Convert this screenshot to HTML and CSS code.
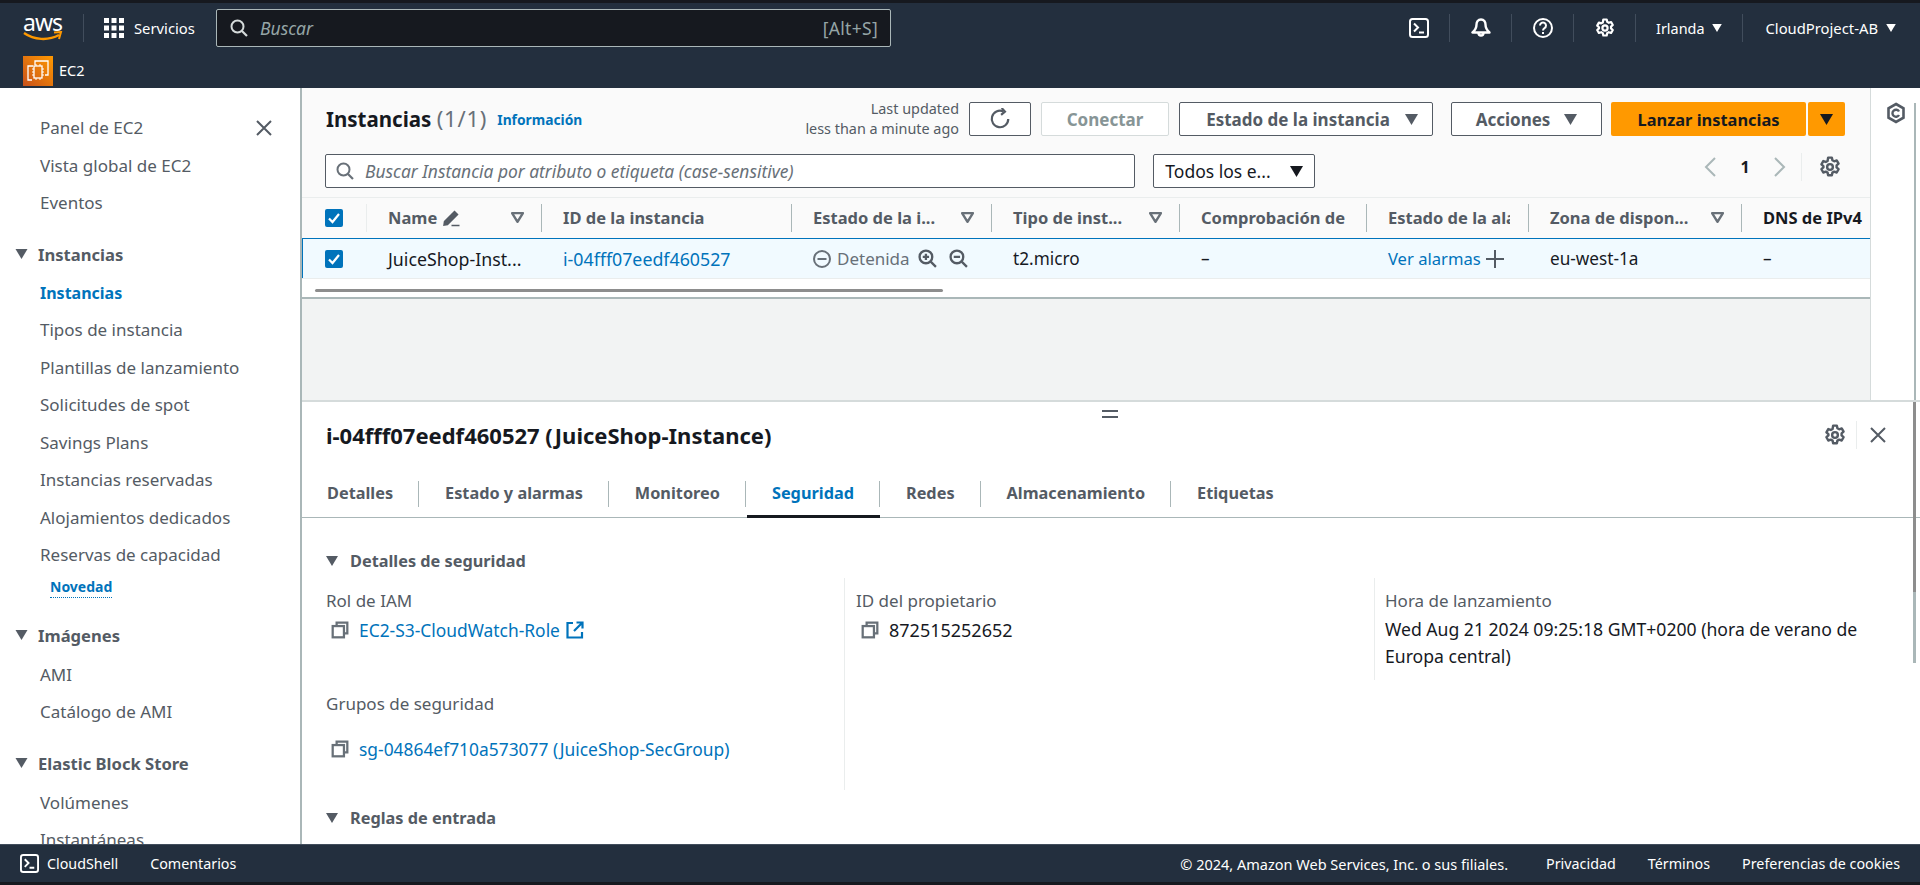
FILE: index.html
```html
<!DOCTYPE html>
<html lang="es">
<head>
    <meta charset="UTF-8">
    <meta content="width=device-width" name="viewport">
    <title>Instancias | EC2</title>
    <link rel="stylesheet" href="styles.css">
</head>
<body>
    <svg class="defs" width="0" height="0">
        <symbol id="i-copy" viewBox="0 0 16 16"><path d="M5 4V1.5h9.5V11H12" fill="none" stroke="currentColor" stroke-width="2"/><rect x="1.5" y="4.5" width="10" height="10" fill="none" stroke="currentColor" stroke-width="2"/></symbol>
        <symbol id="i-gear" viewBox="0 0 20 20"><path d="M8.3 1.5h3.4l.5 2.4 1.6.9 2.3-.8 1.7 3-1.8 1.6v1.8l1.8 1.6-1.7 3-2.3-.8-1.6.9-.5 2.4H8.3l-.5-2.4-1.6-.9-2.3.8-1.7-3 1.8-1.6V9.2L2.2 7.6l1.7-3 2.3.8 1.6-.9z" fill="none" stroke="currentColor" stroke-width="2.2" stroke-linejoin="round"/><circle cx="10" cy="10" r="2.6" fill="none" stroke="currentColor" stroke-width="2.2"/></symbol>
        <symbol id="i-search" viewBox="0 0 18 18"><circle cx="7.5" cy="7.5" r="6" fill="none" stroke="currentColor" stroke-width="2"/><path d="M12 12l5 5" stroke="currentColor" stroke-width="2.2"/></symbol>
        <symbol id="i-shell" viewBox="0 0 20 20"><rect x="1" y="1" width="18" height="18" rx="2.5" fill="none" stroke="currentColor" stroke-width="2"/><path d="M5 5.5l4 4-4 4M10 14.5h5" fill="none" stroke="currentColor" stroke-width="2"/></symbol>
        <symbol id="i-caret" viewBox="0 0 12 10"><path d="M0 0h12L6 10z" fill="currentColor"/></symbol>
        <symbol id="i-filter" viewBox="0 0 12 10"><path d="M1 1h10L6 9z" fill="none" stroke="currentColor" stroke-width="2.2" stroke-linejoin="round"/></symbol>
        <symbol id="i-check" viewBox="0 0 18 18"><rect width="18" height="18" rx="2" fill="#0073bb"/><path d="M4 9.5l3.5 3.5L14 5" fill="none" stroke="#fff" stroke-width="2.2"/></symbol>
        <symbol id="i-close" viewBox="0 0 16 16"><path d="M1 1l14 14M15 1L1 15" stroke="currentColor" stroke-width="2"/></symbol>
    </svg>

    <header class="topnav">
        <div class="nav-row">
            <a class="logo">
                <span class="logo-text">aws</span>
                <svg class="logo-smile" viewBox="0 0 40 12"><path d="M1 2c10 7 24 8 35 2" fill="none" stroke="#f90" stroke-width="2.4"/><path d="M31 1.5l7-.5-2 7" fill="none" stroke="#f90" stroke-width="2"/></svg>
            </a>
            <span class="nav-sep logo-sep"></span>
            <a class="services">
                <svg class="grid-icon" viewBox="0 0 20 20"><g fill="#fff"><rect width="5" height="5"/><rect x="7.5" width="5" height="5"/><rect x="15" width="5" height="5"/><rect y="7.5" width="5" height="5"/><rect x="7.5" y="7.5" width="5" height="5"/><rect x="15" y="7.5" width="5" height="5"/><rect y="15" width="5" height="5"/><rect x="7.5" y="15" width="5" height="5"/><rect x="15" y="15" width="5" height="5"/></g></svg>
                Servicios
            </a>
            <div class="global-search">
                <svg class="icon-18"><use href="#i-search"/></svg>
                <span class="global-search-text">Buscar</span>
                <span class="shortcut">[Alt+S]</span>
            </div>
            <div class="nav-right">
                <a class="nav-icon"><svg class="icon-20"><use href="#i-shell"/></svg></a>
                <a class="nav-icon">
                    <svg class="icon-20" viewBox="0 0 20 20"><path d="M10 1.5c-3 0-4.5 2.5-4.5 5 0 3-1 5.500-4 8h17c-3-2.500-4-5-4-8 0-2.500-1.500-5-4.500-5z" fill="none" stroke="#fff" stroke-width="2.4" stroke-linejoin="round"/><path d="M7.5 15a2.5 2.5 0 0 0 5 0" fill="none" stroke="#fff" stroke-width="2.4"/></svg>
                </a>
                <a class="nav-icon">
                    <svg class="icon-20" viewBox="0 0 20 20"><circle cx="10" cy="10" r="9" fill="none" stroke="#fff" stroke-width="2"/><path d="M7 7.5a3 3 0 1 1 4.5 2.6c-1 .6-1.5 1.2-1.5 2.4" fill="none" stroke="#fff" stroke-width="2"/><rect x="9" y="14" width="2" height="2" fill="#fff"/></svg>
                </a>
                <a class="nav-icon"><svg class="icon-20"><use href="#i-gear"/></svg></a>
                <a class="nav-menu region">Irlanda <svg class="nav-caret"><use href="#i-caret"/></svg></a>
                <a class="nav-menu account">CloudProject-AB <svg class="nav-caret"><use href="#i-caret"/></svg></a>
            </div>
        </div>
        <div class="nav-row-2">
            <svg class="ec2-icon" viewBox="0 0 30 30">
                <defs><linearGradient id="ec2-grad" x1="0" y1="1" x2="1" y2="0"><stop offset="0" stop-color="#c8511b"/><stop offset="1" stop-color="#f90"/></linearGradient></defs>
                <rect width="30" height="30" fill="url(#ec2-grad)"/>
                <path d="M9 24H5V10h5M12 9V5h13v14h-3" fill="none" stroke="#fff" stroke-width="1.3"/>
                <rect x="11" y="10" width="8" height="12" fill="none" stroke="#fff" stroke-width="1.3"/>
                <path d="M9 13h2M9 16h2M9 19h2M19 13h2M19 16h2M19 19h2M13 8v2M17 8v2M13 22v2M17 22v2" stroke="#fff"/>
            </svg>
            <span class="ec2-label">EC2</span>
        </div>
    </header>

    <div class="layout">
        <nav class="sidebar">
            <svg class="side-close"><use href="#i-close"/></svg>
            <a class="side-link">Panel de EC2</a>
            <a class="side-link">Vista global de EC2</a>
            <a class="side-link">Eventos</a>
            <div class="side-head"><svg class="side-caret"><use href="#i-caret"/></svg>Instancias</div>
            <a class="side-link active">Instancias</a>
            <a class="side-link">Tipos de instancia</a>
            <a class="side-link">Plantillas de lanzamiento</a>
            <a class="side-link">Solicitudes de spot</a>
            <a class="side-link">Savings Plans</a>
            <a class="side-link">Instancias reservadas</a>
            <a class="side-link">Alojamientos dedicados</a>
            <a class="side-link">Reservas de capacidad</a>
            <span class="side-new">Novedad</span>
            <div class="side-head"><svg class="side-caret"><use href="#i-caret"/></svg>Imágenes</div>
            <a class="side-link">AMI</a>
            <a class="side-link">Catálogo de AMI</a>
            <div class="side-head"><svg class="side-caret"><use href="#i-caret"/></svg>Elastic Block Store</div>
            <a class="side-link">Volúmenes</a>
            <a class="side-link">Instantáneas</a>
        </nav>

        <main class="content">
            <section class="upper">
                <div class="upper-main">
                    <div class="panel-head">
                        <div class="title-row">
                            <h1 class="panel-title">Instancias <span class="count">(1/1)</span></h1>
                            <a class="info-link">Información</a>
                            <div class="updated">Last updated<br>less than a minute ago</div>
                            <button class="btn btn-refresh">
                                <svg class="icon-22" viewBox="0 0 20 20"><path d="M17.5 10A7.5 7.5 0 1 1 13 3.1" fill="none" stroke="currentColor" stroke-width="2"/><path d="M11.5 0l3 3.3-3.5 3" fill="none" stroke="currentColor" stroke-width="2"/></svg>
                            </button>
                            <button class="btn btn-connect" disabled>Conectar</button>
                            <button class="btn btn-state">Estado de la instancia <svg class="btn-caret"><use href="#i-caret"/></svg></button>
                            <button class="btn btn-actions">Acciones <svg class="btn-caret"><use href="#i-caret"/></svg></button>
                            <button class="btn btn-launch">Lanzar instancias</button>
                            <button class="btn btn-launch-more"><svg class="btn-caret"><use href="#i-caret"/></svg></button>
                        </div>
                        <div class="filter-row">
                            <div class="filter-box">
                                <svg class="icon-18"><use href="#i-search"/></svg>
                                <span>Buscar Instancia por atributo o etiqueta (case-sensitive)</span>
                            </div>
                            <button class="btn filter-select">Todos los e... <svg class="btn-caret"><use href="#i-caret"/></svg></button>
                            <div class="pager">
                                <svg class="pager-arrow" viewBox="0 0 14 22"><path d="M12 2L3 11l9 9" fill="none" stroke="currentColor" stroke-width="2"/></svg>
                                <span class="pager-num">1</span>
                                <svg class="pager-arrow" viewBox="0 0 14 22"><path d="M2 2l9 9-9 9" fill="none" stroke="currentColor" stroke-width="2"/></svg>
                                <span class="pager-gear"><svg class="icon-22"><use href="#i-gear"/></svg></span>
                            </div>
                        </div>
                    </div>

                    <div class="table">
                        <div class="tr thead">
                            <div class="th th-check"><svg class="check"><use href="#i-check"/></svg></div>
                            <div class="th">
                                <span>Name</span>
                                <svg class="edit-icon" viewBox="0 0 18 18"><path d="M2 12.5L12 2.500l3 3-10 10-3.500.5zM9 16.500h8" fill="currentColor" stroke="currentColor" stroke-width="1.5"/></svg>
                                <svg class="sort"><use href="#i-filter"/></svg>
                            </div>
                            <div class="th">ID de la instancia</div>
                            <div class="th"><span>Estado de la i...</span><svg class="sort"><use href="#i-filter"/></svg></div>
                            <div class="th"><span>Tipo de inst...</span><svg class="sort"><use href="#i-filter"/></svg></div>
                            <div class="th">Comprobación de</div>
                            <div class="th"><span class="th-clip">Estado de la alarma</span></div>
                            <div class="th"><span>Zona de dispon...</span><svg class="sort"><use href="#i-filter"/></svg></div>
                            <div class="th th-dark">DNS de IPv4</div>
                        </div>
                        <div class="tr trow">
                            <div class="td td-check"><svg class="check"><use href="#i-check"/></svg></div>
                            <div class="td td-wide">JuiceShop-Inst...</div>
                            <div class="td td-wide"><a class="link">i-04fff07eedf460527</a></div>
                            <div class="td state">
                                <svg class="state-icon" viewBox="0 0 18 18"><circle cx="9" cy="9" r="8" fill="none" stroke="currentColor" stroke-width="2"/><path d="M4.5 9h9" stroke="currentColor" stroke-width="2"/></svg>
                                <span>Detenida</span>
                                <svg class="zoom-icon" viewBox="0 0 18 18"><circle cx="7.5" cy="7.5" r="6" fill="none" stroke="currentColor" stroke-width="2.2"/><path d="M12 12l5 5M4.5 7.5h6M7.5 4.5v6" stroke="currentColor" stroke-width="2.2"/></svg>
                                <svg class="zoom-icon" viewBox="0 0 18 18"><circle cx="7.5" cy="7.5" r="6" fill="none" stroke="currentColor" stroke-width="2.2"/><path d="M12 12l5 5M4.5 7.5h6" stroke="currentColor" stroke-width="2.2"/></svg>
                            </div>
                            <div class="td">t2.micro</div>
                            <div class="td">–</div>
                            <div class="td alarm">
                                <a class="link">Ver alarmas</a>
                                <svg class="plus-icon" viewBox="0 0 18 18"><path d="M0 9h18M9 0v18" stroke="currentColor" stroke-width="2"/></svg>
                            </div>
                            <div class="td">eu-west-1a</div>
                            <div class="td">–</div>
                        </div>
                        <div class="hscroll"><span class="hscroll-thumb"></span></div>
                    </div>
                    <div class="empty"></div>
                </div>
                <aside class="rail">
                    <svg class="rail-icon" viewBox="0 0 20 22"><path d="M10 2l7.5 4.3v9.400L10 20l-7.5-4.300V6.300z" fill="none" stroke="#545b64" stroke-width="2.6"/><path d="M13 9.5a3.500 3.500 0 1 0 0 3.500" fill="none" stroke="#545b64" stroke-width="2.4"/></svg>
                </aside>
            </section>

            <section class="lower">
                <span class="split-handle"></span>
                <div class="lower-head">
                    <h2 class="lower-title">i-04fff07eedf460527 (JuiceShop-Instance)</h2>
                    <div class="lower-tools">
                        <svg class="icon-22"><use href="#i-gear"/></svg>
                        <span class="tool-sep"></span>
                        <svg class="lower-close"><use href="#i-close"/></svg>
                    </div>
                </div>
                <div class="tabs">
                    <a class="tab">Detalles</a>
                    <a class="tab">Estado y alarmas</a>
                    <a class="tab">Monitoreo</a>
                    <a class="tab active">Seguridad</a>
                    <a class="tab">Redes</a>
                    <a class="tab">Almacenamiento</a>
                    <a class="tab last">Etiquetas</a>
                </div>
                <div class="sec-head"><svg class="sec-caret"><use href="#i-caret"/></svg>Detalles de seguridad</div>
                <div class="details">
                    <div class="col col-1">
                        <div class="label">Rol de IAM</div>
                        <div class="value">
                            <svg class="copy"><use href="#i-copy"/></svg>
                            <a class="link">EC2-S3-CloudWatch-Role</a>
                            <svg class="ext-icon" viewBox="0 0 18 18"><path d="M7 2H1.5v14.5H16V11" fill="none" stroke="currentColor" stroke-width="2.2"/><path d="M10.5 1.5H16.5V7.5M16 2L8 10" fill="none" stroke="currentColor" stroke-width="2.2"/></svg>
                        </div>
                        <div class="label label-groups">Grupos de seguridad</div>
                        <div class="value value-groups">
                            <svg class="copy"><use href="#i-copy"/></svg>
                            <a class="link">sg-04864ef710a573077 (JuiceShop-SecGroup)</a>
                        </div>
                    </div>
                    <div class="col col-2">
                        <div class="label">ID del propietario</div>
                        <div class="value">
                            <svg class="copy"><use href="#i-copy"/></svg>
                            <span class="owner-id">872515252652</span>
                        </div>
                    </div>
                    <div class="col col-3">
                        <div class="label">Hora de lanzamiento</div>
                        <div class="value-text">Wed Aug 21 2024 09:25:18 GMT+0200 (hora de verano de Europa central)</div>
                    </div>
                </div>
                <div class="sec-head sec-rules"><svg class="sec-caret"><use href="#i-caret"/></svg>Reglas de entrada</div>
                <span class="vscroll"></span>
            </section>
        </main>
    </div>

    <footer class="footer">
        <svg class="foot-shell"><use href="#i-shell"/></svg>
        <a class="foot-shell-label">CloudShell</a>
        <a class="foot-feedback">Comentarios</a>
        <span class="copyright">© 2024, Amazon Web Services, Inc. o sus filiales.</span>
        <a class="foot-link foot-first">Privacidad</a>
        <a class="foot-link">Términos</a>
        <a class="foot-link">Preferencias de cookies</a>
    </footer>
</body>
</html>
```

FILE: styles.css
```css
* {
    margin: 0;
    padding: 0;
    box-sizing: border-box;
}
html, body {
    height: 100%;
    overflow: hidden;
}
body {
    display: flex;
    flex-direction: column;
    height: 885px;
    background-color: #16191f;
    color: #16191f;
    font-family: "Noto Sans", "Open Sans", sans-serif;
    font-size: 16px;
}
svg {
    display: block;
    flex: none;
}
.defs {
    position: absolute;
}
.icon-18 {
    width: 18px;
    height: 18px;
}
.icon-20 {
    width: 20px;
    height: 20px;
}
.icon-22 {
    width: 22px;
    height: 22px;
}
.link {
    color: #0073bb;
}

/* top nav */
.topnav {
    flex: none;
    height: 85px;
    margin-top: 3px;
    background-color: #232f3e;
    color: #fff;
    font-size: 15px;
}
.nav-row {
    display: flex;
    align-items: center;
    height: 50px;
    padding: 0 24px 0 23px;
}
.logo {
    width: 40px;
    position: relative;
    height: 30px;
}
.logo-text {
    display: block;
    font-size: 23px;
    line-height: 24px;
    letter-spacing: -1px;
    margin-top: -3px;
}
.logo-smile {
    position: absolute;
    left: 0;
    top: 18px;
    width: 40px;
    height: 12px;
}
.nav-sep {
    width: 1px;
    height: 28px;
    background-color: #414d5c;
}
.logo-sep {
    margin-left: 20px;
}
.services {
    display: flex;
    align-items: center;
    gap: 10px;
    margin-left: 20px;
    width: 112px;
    font-size: 14.8px;
}
.grid-icon {
    width: 20px;
    height: 20px;
}
.global-search {
    display: flex;
    align-items: center;
    width: 675px;
    height: 38px;
    padding: 0 12px 0 13px;
    border: 1px solid #aab7b8;
    border-radius: 2px;
    background-color: #16191f;
    color: #d5dbdb;
}
.global-search-text {
    margin-left: 12px;
    color: #95a5a6;
    font-style: italic;
    font-size: 17.5px;
}
.shortcut {
    margin-left: auto;
    color: #95a5a6;
    font-size: 17.5px;
    letter-spacing: .3px;
}
.nav-right {
    display: flex;
    align-items: center;
    margin-left: auto;
}
.nav-icon {
    display: flex;
    justify-content: center;
    width: 62px;
    height: 28px;
    align-items: center;
    border-right: 1px solid #414d5c;
    color: #fff;
}
.nav-menu {
    display: flex;
    align-items: center;
    height: 28px;
    gap: 8px;
    white-space: nowrap;
}
.region {
    padding: 0 20px;
    border-right: 1px solid #414d5c;
    font-size: 14.4px;
}
.account {
    padding-left: 22px;
    font-size: 14.8px;
}
.nav-caret {
    width: 10px;
    height: 8px;
}
.nav-row-2 {
    display: flex;
    align-items: center;
    height: 35px;
    padding-left: 23px;
}
.ec2-icon {
    width: 30px;
    height: 30px;
}
.ec2-label {
    margin: -2px 0 0 6px;
    font-size: 14.5px;
}

/* page */
.layout {
    display: flex;
    height: 756px;
    background-color: #fff;
}
.sidebar {
    position: relative;
    flex: none;
    width: 302px;
    padding: 21px 0 0 40px;
    border-right: 2px solid #aab7b8;
    overflow: hidden;
    color: #545b64;
    background-color: #fff;
    font-size: 17px;
}
.side-link {
    display: block;
    line-height: 37.5px;
}
.side-link.active {
    margin: 1px 0 -1px;
    color: #0073bb;
    font-size: 16px;
    font-weight: 700;
}
.side-head {
    display: flex;
    align-items: center;
    gap: 10px;
    margin: 14px 0 1.5px -25px;
    font-size: 16.6px;
    font-weight: 700;
    line-height: 37.5px;
}
.side-caret {
    width: 13px;
    height: 10px;
}
.side-new {
    display: inline-block;
    margin: -6px 0 5px 10px;
    border-bottom: 1px dotted #0073bb;
    color: #0073bb;
    font-size: 14px;
    font-weight: 700;
    line-height: 20px;
}
.side-close {
    position: absolute;
    left: 256px;
    top: 32px;
    width: 16px;
    height: 16px;
}
.content {
    flex: 1;
    display: flex;
    flex-direction: column;
    min-width: 0;
}
.upper {
    display: flex;
    height: 312px;
}
.upper-main {
    display: flex;
    flex-direction: column;
    width: 1568px;
    background-color: #f2f3f3;
}
.rail {
    flex: 1;
    position: relative;
    padding: 14px 0 0 15px;
    border-left: 1px solid #d5dbdb;
    background-color: #fff;
}
.rail-icon {
    width: 20px;
    height: 22px;
}
.rail::after {
    content: "";
    position: absolute;
    right: 4px;
    top: 15px;
    bottom: 0;
    width: 2px;
    background-color: #aab7b8;
}
.panel-head {
    height: 109px;
    padding: 14px 25px 0 23px;
    background-color: #fafafa;
}
.title-row, .filter-row {
    display: flex;
    align-items: center;
}
.title-row {
    height: 34px;
}
.panel-title {
    margin: -2px 0 0 1px;
    font-size: 20.5px;
    font-weight: 700;
    white-space: nowrap;
}
.count {
    color: #687078;
    font-size: 22px;
    font-weight: 400;
    letter-spacing: .8px;
}
.info-link {
    margin: 1px 0 0 10px;
    color: #0073bb;
    font-size: 13.8px;
    font-weight: 700;
}
.updated {
    margin-left: auto;
    margin-right: 10px;
    text-align: right;
    color: #545b64;
    font-size: 14.4px;
    line-height: 20px;
}
.btn {
    display: flex;
    align-items: center;
    justify-content: center;
    height: 34px;
    border: 1px solid #545b64;
    border-radius: 2px;
    background-color: #fff;
    color: #545b64;
    font-family: inherit;
    font-size: 17px;
    font-weight: 700;
    white-space: nowrap;
}
.btn-caret {
    width: 13px;
    height: 11px;
}
.btn-refresh {
    width: 62px;
}
.btn-connect {
    width: 128px;
    margin-left: 10px;
    border-color: #d5dbdb;
    color: #879596;
}
.btn-state {
    width: 254px;
    margin-left: 10px;
    padding-left: 12px;
    gap: 15px;
}
.btn-actions {
    width: 151px;
    margin-left: 18px;
    gap: 14px;
}
.btn-launch {
    width: 195px;
    margin-left: 9px;
    border: 0;
    background-color: #f90;
    color: #16191f;
    font-size: 16.4px;
}
.btn-launch-more {
    width: 37px;
    margin-left: 2px;
    border: 0;
    background-color: #f90;
    color: #16191f;
}
.filter-row {
    margin-top: 18px;
}
.filter-box {
    display: flex;
    align-items: center;
    gap: 11px;
    width: 810px;
    height: 34px;
    padding-left: 10px;
    border: 1px solid #545b64;
    border-radius: 2px;
    background-color: #fff;
    color: #687078;
    font-size: 17.4px;
    font-style: italic;
}
.filter-select {
    width: 162px;
    margin-left: 18px;
    gap: 19px;
    font-size: 17.5px;
    font-weight: 400;
    color: #16191f;
}
.pager {
    display: flex;
    align-items: center;
    margin-left: auto;
    margin-top: -8px;
    color: #aab7b8;
}
.pager-arrow {
    width: 14px;
    height: 22px;
}
.pager-num {
    width: 56px;
    text-align: center;
    color: #16191f;
    font-weight: 700;
}
.pager-gear {
    margin-left: 14px;
    padding: 3px 4px 3px 17px;
    border-left: 1px solid #eaeded;
    color: #545b64;
}

/* instance table */
.table {
    height: 102px;
    overflow: hidden;
    border-top: 1px solid #eaeded;
    border-bottom: 2px solid #aab7b8;
    background-color: #fff;
}
.tr {
    display: grid;
    grid-template-columns: 65px 175px 250px 200px 188px 187px 162px 213px 128px;
}
.thead {
    height: 40px;
    padding-bottom: 1px;
    align-items: center;
    background-color: #fafafa;
    color: #545b64;
    font-size: 16.5px;
    font-weight: 700;
    white-space: nowrap;
}
.th {
    display: flex;
    align-items: center;
    height: 28px;
    padding: 0 17px 0 21px;
    border-right: 1px solid #aab7b8;
    overflow: hidden;
}
.th-clip {
    overflow: hidden;
    width: 122px;
}
.th-check {
    padding-left: 23px;
    border-right-color: #eaeded;
}
.th-dark {
    color: #16191f;
    border-right: 0;
}
.check {
    width: 18px;
    height: 18px;
}
.edit-icon {
    width: 19px;
    height: 18px;
    margin-left: 5px;
}
.sort {
    width: 13px;
    height: 11px;
    margin-left: auto;
    flex: none;
    color: #687078;
}
.trow {
    height: 41px;
    align-items: center;
    border-top: 1px solid #0073bb;
    border-bottom: 1px solid #eaeded;
    background-color: #f1faff;
    box-shadow: inset 1px 0 0 #0073bb;
    font-size: 17.2px;
}
.td {
    display: flex;
    align-items: center;
    padding-left: 21px;
    white-space: nowrap;
    overflow: hidden;
}
.td-check {
    padding-left: 23px;
}
.td-wide {
    font-size: 17.8px;
}
.state {
    color: #687078;
    font-size: 17px;
}
.state-icon {
    width: 18px;
    height: 18px;
    margin-right: 6px;
}
.zoom-icon {
    width: 19px;
    height: 19px;
    margin-left: 8px;
    color: #545b64;
}
.state .zoom-icon + .zoom-icon {
    margin-left: 12px;
}
.alarm {
    font-size: 16.6px;
}
.plus-icon {
    width: 18px;
    height: 18px;
    margin-left: 5px;
    color: #545b64;
}
.hscroll {
    padding: 10px 0 0 13px;
}
.hscroll-thumb {
    display: block;
    width: 628px;
    height: 3px;
    background-color: #8d8d8d;
    border-radius: 2px;
}
.empty {
    flex: 1;
}

/* split panel */
.lower {
    position: relative;
    flex: 1;
    border-top: 2px solid #d5dbdb;
    background-color: #fff;
    overflow: hidden;
}
.split-handle {
    position: absolute;
    left: 800px;
    top: 8px;
    width: 16px;
    height: 8px;
    border-top: 2px solid #545b64;
    border-bottom: 2px solid #545b64;
}
.lower-head {
    display: flex;
    align-items: center;
    height: 71px;
    padding: 0 34px 5px 24px;
}
.lower-title {
    font-size: 22px;
    font-weight: 700;
}
.lower-tools {
    display: flex;
    align-items: center;
    margin-left: auto;
    color: #545b64;
}
.tool-sep {
    width: 1px;
    height: 28px;
    margin: 0 13px 0 10px;
    background-color: #eaeded;
}
.lower-close {
    width: 16px;
    height: 16px;
}
.tabs {
    display: flex;
    align-items: stretch;
    height: 45px;
    border-bottom: 1px solid #aab7b8;
    color: #545b64;
    font-size: 16.3px;
    font-weight: 700;
}
.tab {
    position: relative;
    display: flex;
    align-items: center;
    padding: 0 26px 5px;
    white-space: nowrap;
}
.tab:first-child {
    padding-left: 25px;
}
.tab::after {
    content: "";
    position: absolute;
    right: 0;
    top: 8px;
    bottom: 10px;
    width: 1px;
    background-color: #aab7b8;
}
.tab.last::after {
    display: none;
}
.tab.active {
    color: #0073bb;
}
.tab.active::before {
    content: "";
    position: absolute;
    left: 1px;
    right: 0;
    bottom: -1px;
    height: 3px;
    background-color: #16191f;
}
.sec-head {
    display: flex;
    align-items: center;
    gap: 12px;
    margin-top: 31px;
    padding-left: 24px;
    color: #545b64;
    font-size: 16.3px;
    font-weight: 700;
    line-height: 24px;
}
.sec-caret {
    width: 12px;
    height: 10px;
}
.details {
    display: grid;
    grid-template-columns: 542px 530px 1fr;
    margin-top: 5px;
    align-items: start;
}
.col {
    height: 212px;
    padding: 11px 0 0 11px;
    border-left: 1px solid #eaeded;
}
.col-1 {
    padding-left: 24px;
    border-left: 0;
}
.col-3 {
    height: 102px;
    padding-left: 10px;
}
.label {
    color: #545b64;
    font-size: 17px;
    line-height: 24px;
}
.value {
    display: flex;
    align-items: center;
    gap: 10px;
    height: 24px;
    margin-top: 5px;
    padding-left: 5px;
    font-size: 17.4px;
}
.copy {
    width: 18px;
    height: 18px;
    color: #687078;
}
.owner-id {
    font-size: 18px;
}
.ext-icon {
    width: 18px;
    height: 18px;
    margin-left: -4px;
    color: #0073bb;
}
.label-groups {
    margin-top: 50px;
}
.value-groups {
    margin-top: 21px;
}
.value-text {
    margin-top: 3px;
    font-size: 17.6px;
    line-height: 27px;
    max-width: 510px;
}
.sec-rules {
    margin-top: 16px;
}
.vscroll {
    position: absolute;
    right: 4px;
    top: 0;
    height: 261px;
    width: 3px;
    background: linear-gradient(#8d8d8d 190px, #aab7b8 190px);
}

/* footer */
.footer {
    flex: none;
    display: flex;
    align-items: center;
    height: 38px;
    padding: 0 20px;
    border-top: 1px solid #414d5c;
    background-color: #232f3e;
    color: #fff;
    font-size: 14.3px;
    white-space: nowrap;
}
.foot-shell {
    width: 19px;
    height: 19px;
}
.foot-shell-label {
    margin-left: 8px;
}
.foot-feedback {
    margin-left: 32px;
}
.copyright {
    margin-left: auto;
    font-size: 14.5px;
}
.foot-link {
    margin-left: 32px;
}
.foot-first {
    margin-left: 38px;
}
```
